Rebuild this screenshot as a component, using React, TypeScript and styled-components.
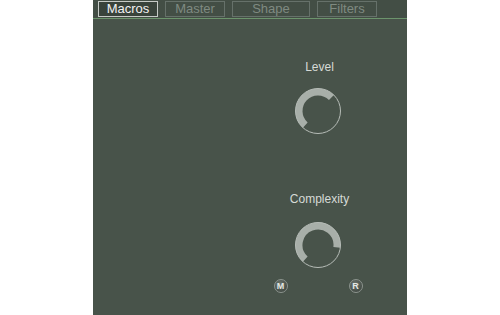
import React from 'react';
import styled, { createGlobalStyle } from 'styled-components';

const GlobalStyle = createGlobalStyle`
  html, body {
    margin: 0;
    padding: 0;
    background: #ffffff;
  }
  body {
    font-family: 'Liberation Sans', Arial, sans-serif;
  }
`;

const Panel = styled.div`
  width: 314px;
  height: 315px;
  margin: 0 auto;
  background: #48534a;
  display: flex;
  flex-direction: column;
`;

const TabBar = styled.div`
  height: 19px;
  box-sizing: border-box;
  border-bottom: 1px solid #6c946c;
  background: #434e45;
  display: flex;
  align-items: flex-start;
  padding: 1px 0 0 5px;
  gap: 7px;
`;

const Tab = styled.div<{ $active?: boolean; $width: number }>`
  width: ${(p) => p.$width}px;
  height: 16px;
  box-sizing: border-box;
  border: 1px solid ${(p) => (p.$active ? '#c6cac6' : '#66716a')};
  background: ${(p) => (p.$active ? '#39433b' : '#434e45')};
  color: ${(p) => (p.$active ? '#f2f2f2' : '#7f8a81')};
  font-size: 13px;
  line-height: 14px;
  text-align: center;
`;

const Content = styled.div`
  flex: 1;
  display: flex;
  justify-content: flex-end;
  padding-right: 39px;
`;

const Column = styled.div`
  width: 100px;
  display: flex;
  flex-direction: column;
  align-items: center;
`;

const KnobGroup = styled.div<{ $top: number }>`
  margin-top: ${(p) => p.$top}px;
  display: flex;
  flex-direction: column;
  align-items: center;
`;

const Label = styled.div`
  color: #d6dad6;
  font-size: 12px;
  line-height: 14px;
  height: 14px;
  padding-left: 3px;
`;

const KnobSvg = styled.svg<{ $gap: number }>`
  display: block;
  margin-top: ${(p) => p.$gap}px;
`;

const ButtonRow = styled.div`
  width: 89px;
  margin-top: 10px;
  display: flex;
  justify-content: space-between;
`;

const RoundButton = styled.div`
  width: 14px;
  height: 14px;
  border-radius: 50%;
  box-sizing: border-box;
  border: 1px solid #8c948e;
  background: radial-gradient(circle at 40% 35%, #6d766f 0%, #3a423c 90%);
  color: #e4e8e4;
  font-size: 9px;
  font-weight: bold;
  line-height: 12px;
  text-align: center;
`;

const polar = (deg: number, r: number) => {
  const a = ((deg - 90) * Math.PI) / 180;
  return [24 + r * Math.cos(a), 24 + r * Math.sin(a)];
};

const Knob: React.FC<{ from: number; to: number; gap: number }> = ({ from, to, gap }) => {
  const r = 19;
  const [x1, y1] = polar(from, r);
  const [x2, y2] = polar(to, r);
  const span = (to - from + 360) % 360;
  const large = span > 180 ? 1 : 0;
  return (
    <KnobSvg $gap={gap} width="48" height="48" viewBox="0 0 48 48">
      <path
        d={`M ${x1} ${y1} A ${r} ${r} 0 ${large} 1 ${x2} ${y2}`}
        fill="none"
        stroke="#a8afa9"
        strokeWidth="7"
      />
      <circle cx="24" cy="24" r="22.5" fill="none" stroke="#b6bcb7" strokeWidth="1" />
    </KnobSvg>
  );
};

const App: React.FC = () => {
  return (
    <React.Fragment>
      <GlobalStyle />
      <Panel>
        <TabBar>
          <Tab $active $width={60}>Macros</Tab>
          <Tab $width={60}>Master</Tab>
          <Tab $width={78}>Shape</Tab>
          <Tab $width={60}>Filters</Tab>
        </TabBar>
        <Content>
          <Column>
            <KnobGroup $top={41}>
              <Label>Level</Label>
              <Knob from={222} to={45} gap={13} />
            </KnobGroup>
            <KnobGroup $top={57}>
              <Label>Complexity</Label>
              <Knob from={222} to={97} gap={15} />
            </KnobGroup>
            <ButtonRow>
              <RoundButton>M</RoundButton>
              <RoundButton>R</RoundButton>
            </ButtonRow>
          </Column>
        </Content>
      </Panel>
    </React.Fragment>
  );
};

export default App;
